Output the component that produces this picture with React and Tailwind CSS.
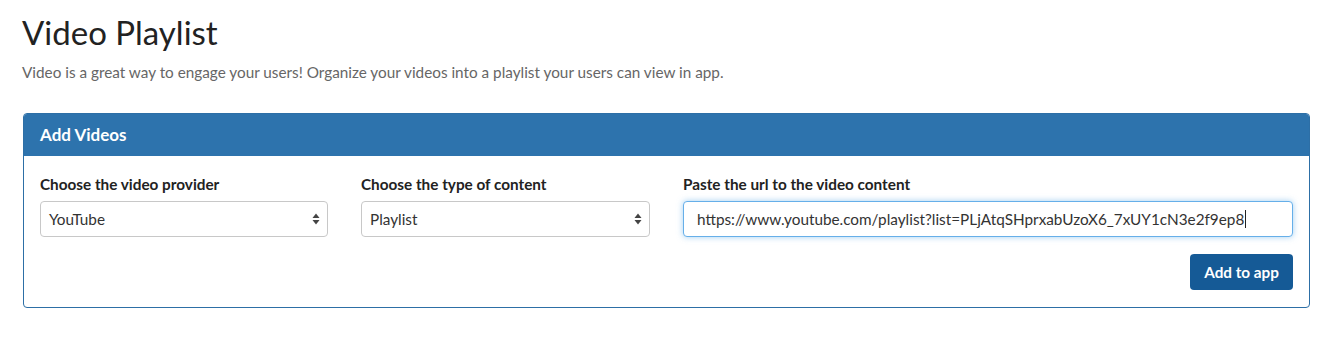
import React from "react";

function SelectArrows() {
  return (
    <svg width="8" height="13" viewBox="0 0 8 13" className="absolute right-[7px] top-1/2 -translate-y-1/2">
      <path d="M4 1 L7.5 5.5 L0.5 5.5 Z" fill="#444" />
      <path d="M4 12 L7.5 7.5 L0.5 7.5 Z" fill="#444" />
    </svg>
  );
}

function FakeSelect({ value }) {
  return (
    <div className="relative h-[36px] rounded-[4px] border border-[#c8c8c8] bg-white pl-[8px] flex items-center text-[15.3px] text-[#333]">
      {value}
      <SelectArrows />
    </div>
  );
}

export default function App() {
  return (
    <div className="bg-white w-[1335px] h-[339px] px-[22px] pt-[12px]" style={{ fontFamily: "Lato, 'Liberation Sans', sans-serif" }}>
      <h1 className="text-[33px] leading-[40px] text-[#222] font-normal">Video Playlist</h1>
      <p className="mt-[10px] text-[15.3px] leading-[20px] text-[#666]">
        Video is a great way to engage your users! Organize your videos into a playlist your users can view in app.
      </p>
      <div className="mt-[31px] ml-[1px] w-[1287px] rounded-[4px] border border-[#2d6fa6] overflow-hidden">
        <div className="h-[42px] bg-[#2d73ad] px-[16px] flex items-center text-white text-[17px] font-bold">
          Add Videos
        </div>
        <div className="px-[16px] pt-[18px] pb-[17px]">
          <div className="flex gap-[33px]">
            <div className="w-[288px]">
              <div className="text-[15.3px] font-bold text-[#222] leading-[20px] mb-[7px]">Choose the video provider</div>
              <FakeSelect value="YouTube" />
            </div>
            <div className="w-[289px]">
              <div className="text-[15.3px] font-bold text-[#222] leading-[20px] mb-[7px]">Choose the type of content</div>
              <FakeSelect value="Playlist" />
            </div>
            <div className="flex-1">
              <div className="text-[15.3px] font-bold text-[#222] leading-[20px] mb-[7px]">Paste the url to the video content</div>
              <div className="h-[36px] rounded-[4px] border border-[#66afe9] shadow-[0_0_6px_rgba(102,175,233,0.6)] bg-white pl-[13px] flex items-center text-[15.3px] text-[#333]">
                https://www.youtube.com/playlist?list=PLjAtqSHprxabUzoX6_7xUY1cN3e2f9ep8
                <span className="inline-block w-px h-[18px] bg-[#222] ml-[1px]" />
              </div>
            </div>
          </div>
          <div className="flex justify-end mt-[17px]">
            <button className="h-[36px] px-[14px] rounded-[4px] bg-[#155a96] text-white text-[15.3px] font-bold">Add to app</button>
          </div>
        </div>
      </div>
    </div>
  );
}
